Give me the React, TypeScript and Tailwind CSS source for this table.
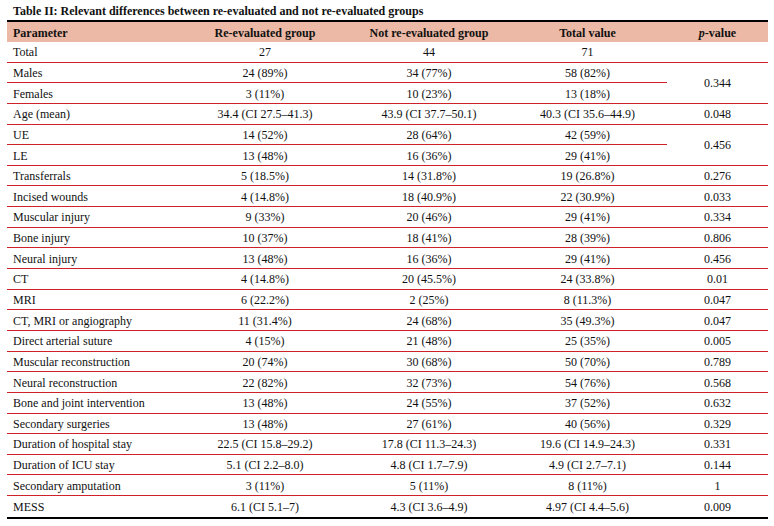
import React from "react";

type Row = {
  label: string;
  re: string;
  notRe: string;
  total: string;
  p?: string;
  span?: number;
  skipP?: boolean;
};

const rows: Row[] = [
  { label: "Total", re: "27", notRe: "44", total: "71", p: "" },
  { label: "Males", re: "24 (89%)", notRe: "34 (77%)", total: "58 (82%)", p: "0.344", span: 2 },
  { label: "Females", re: "3 (11%)", notRe: "10 (23%)", total: "13 (18%)", skipP: true },
  { label: "Age (mean)", re: "34.4 (CI 27.5–41.3)", notRe: "43.9 (CI 37.7–50.1)", total: "40.3 (CI 35.6–44.9)", p: "0.048" },
  { label: "UE", re: "14 (52%)", notRe: "28 (64%)", total: "42 (59%)", p: "0.456", span: 2 },
  { label: "LE", re: "13 (48%)", notRe: "16 (36%)", total: "29 (41%)", skipP: true },
  { label: "Transferrals", re: "5 (18.5%)", notRe: "14 (31.8%)", total: "19 (26.8%)", p: "0.276" },
  { label: "Incised wounds", re: "4 (14.8%)", notRe: "18 (40.9%)", total: "22 (30.9%)", p: "0.033" },
  { label: "Muscular injury", re: "9 (33%)", notRe: "20 (46%)", total: "29 (41%)", p: "0.334" },
  { label: "Bone injury", re: "10 (37%)", notRe: "18 (41%)", total: "28 (39%)", p: "0.806" },
  { label: "Neural injury", re: "13 (48%)", notRe: "16 (36%)", total: "29 (41%)", p: "0.456" },
  { label: "CT", re: "4 (14.8%)", notRe: "20 (45.5%)", total: "24 (33.8%)", p: "0.01" },
  { label: "MRI", re: "6 (22.2%)", notRe: "2 (25%)", total: "8 (11.3%)", p: "0.047" },
  { label: "CT, MRI or angiography", re: "11 (31.4%)", notRe: "24 (68%)", total: "35 (49.3%)", p: "0.047" },
  { label: "Direct arterial suture", re: "4 (15%)", notRe: "21 (48%)", total: "25 (35%)", p: "0.005" },
  { label: "Muscular reconstruction", re: "20 (74%)", notRe: "30 (68%)", total: "50 (70%)", p: "0.789" },
  { label: "Neural reconstruction", re: "22 (82%)", notRe: "32 (73%)", total: "54 (76%)", p: "0.568" },
  { label: "Bone and joint intervention", re: "13 (48%)", notRe: "24 (55%)", total: "37 (52%)", p: "0.632" },
  { label: "Secondary surgeries", re: "13 (48%)", notRe: "27 (61%)", total: "40 (56%)", p: "0.329" },
  { label: "Duration of hospital stay", re: "22.5 (CI 15.8–29.2)", notRe: "17.8 (CI 11.3–24.3)", total: "19.6 (CI 14.9–24.3)", p: "0.331" },
  { label: "Duration of ICU stay", re: "5.1 (CI 2.2–8.0)", notRe: "4.8 (CI 1.7–7.9)", total: "4.9 (CI 2.7–7.1)", p: "0.144" },
  { label: "Secondary amputation", re: "3 (11%)", notRe: "5 (11%)", total: "8 (11%)", p: "1" },
  { label: "MESS", re: "6.1 (CI 5.1–7)", notRe: "4.3 (CI 3.6–4.9)", total: "4.97 (CI 4.4–5.6)", p: "0.009" },
];

export default function App() {
  const last = rows.length - 1;
  return (
    <div className="w-[774px] h-[526px] bg-white text-[#111] text-[12px] leading-none" style={{ fontFamily: '"Liberation Serif", "Times New Roman", serif' }}>
      <div className="ml-[7px] w-[761px]">
        <div className="h-[20px] flex items-center pl-[6px] pt-[1px] font-bold">
          Table II: Relevant differences between re-evaluated and not re-evaluated groups
        </div>
        <table className="w-[761px] table-fixed border-separate border-spacing-0 border-t-2 border-b-2 border-black">
          <colgroup>
            <col className="w-[173px]" />
            <col className="w-[170px]" />
            <col className="w-[158px]" />
            <col className="w-[159px]" />
            <col className="w-[101px]" />
          </colgroup>
          <thead>
            <tr className="bg-[#ecb9a6]">
              <th className="h-[20px] p-0 pt-[1px] pl-[6px] text-left font-bold">Parameter</th>
              <th className="h-[20px] p-0 pt-[1px] text-center font-bold">Re-evaluated group</th>
              <th className="h-[20px] p-0 pt-[1px] text-center font-bold">Not re-evaluated group</th>
              <th className="h-[20px] p-0 pt-[1px] text-center font-bold">Total value</th>
              <th className="h-[20px] p-0 pt-[1px] text-center font-bold">
                <i>p</i>-value
              </th>
            </tr>
          </thead>
          <tbody>
            {rows.map((r, i) => {
              const line = i === last ? "" : "border-b border-[#d0202a]";
              return (
                <tr key={r.label}>
                  <td className={`h-[20.65px] p-0 pt-[1px] pl-[6px] text-left ${line}`}>{r.label}</td>
                  <td className={`h-[20.65px] p-0 pt-[1px] text-center ${line}`}>{r.re}</td>
                  <td className={`h-[20.65px] p-0 pt-[1px] text-center ${line}`}>{r.notRe}</td>
                  <td className={`h-[20.65px] p-0 pt-[1px] text-center ${line}`}>{r.total}</td>
                  {!r.skipP && (
                    <td rowSpan={r.span ?? 1} className={`h-[20.65px] p-0 pt-[1px] text-center ${line}`}>
                      {r.p}
                    </td>
                  )}
                </tr>
              );
            })}
          </tbody>
        </table>
      </div>
    </div>
  );
}
